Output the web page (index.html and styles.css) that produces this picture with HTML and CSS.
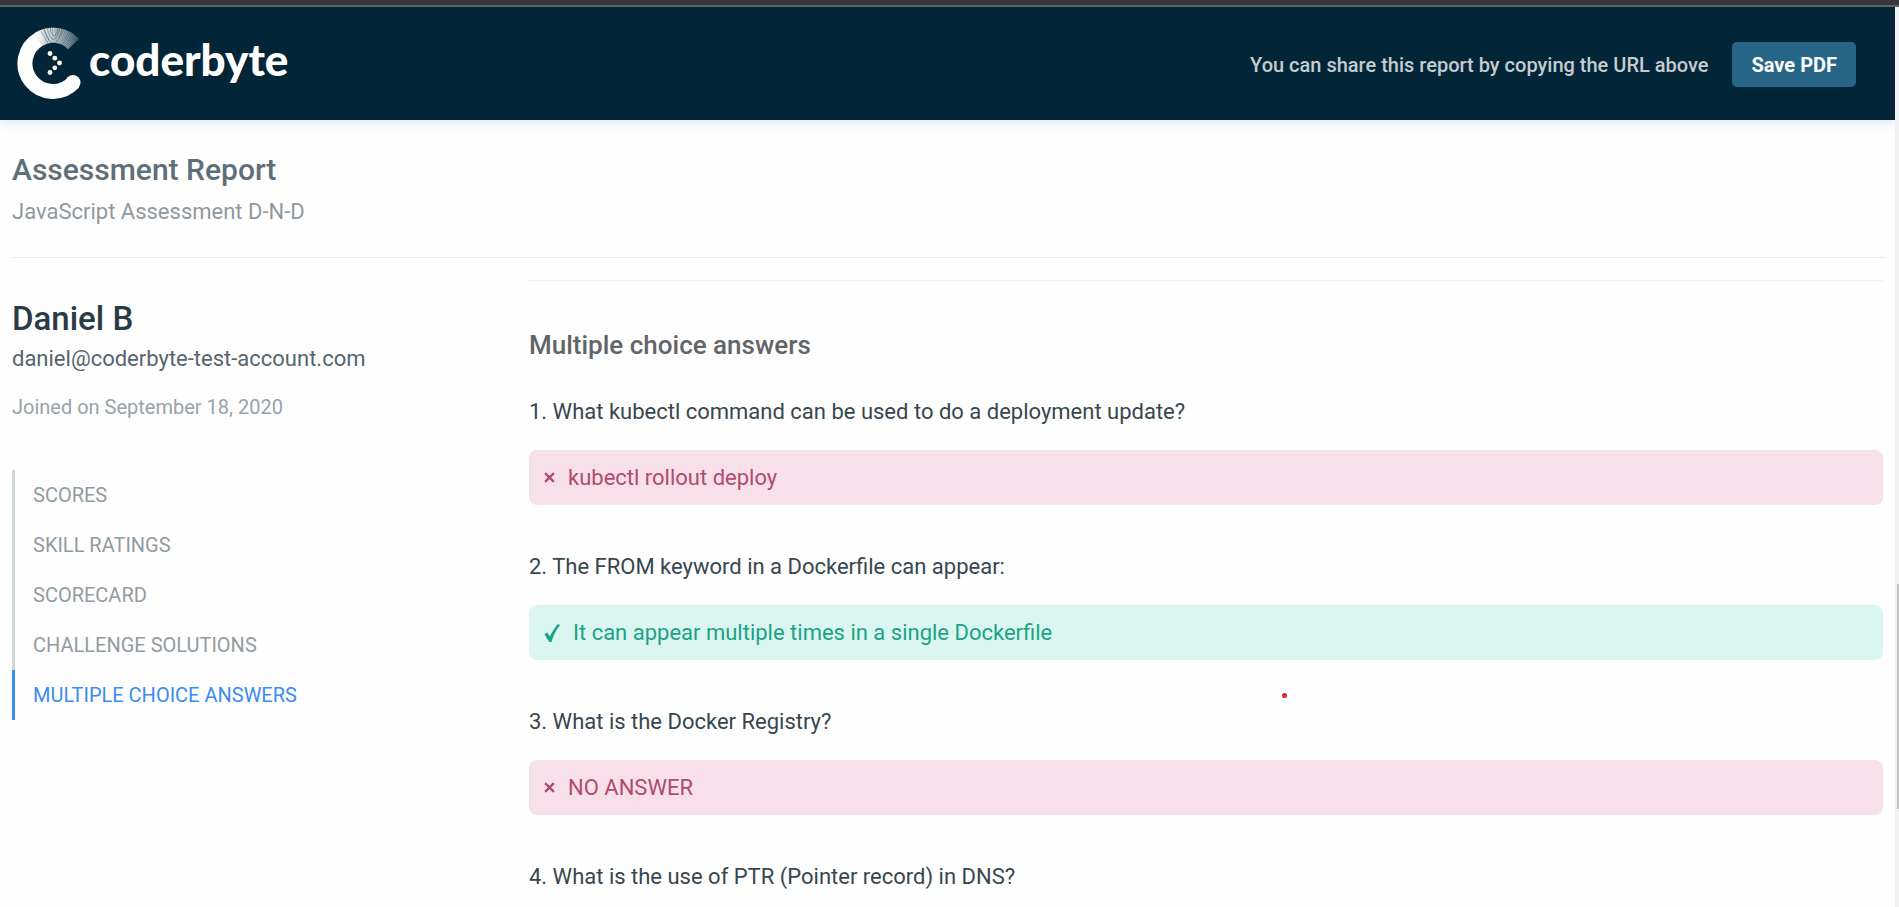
FILE: index.html
```html
<!DOCTYPE html>
<html lang="en">
<head>
<meta charset="utf-8">
<title>Assessment Report</title>
<link rel="stylesheet" href="styles.css">
</head>
<body>
<div class="browser-edge"></div>
<div class="viewport">
  <div class="page">
    <header class="topbar">
      <a class="logo" href="#" aria-label="coderbyte home">
        <svg class="logo-mark" viewBox="0 0 72 72" aria-hidden="true">
          <defs>
            <linearGradient id="fade" gradientUnits="userSpaceOnUse" x1="20" y1="0" x2="62" y2="0">
              <stop offset="0" stop-color="#fff"/>
              <stop offset="0.4" stop-color="#fff" stop-opacity="0.6"/>
              <stop offset="1" stop-color="#fff" stop-opacity="0.15"/>
            </linearGradient>
          </defs>
          <path d="M56.5 55.5A28 28 0 1 1 22 12.200" fill="none" stroke="#fff" stroke-width="15"/>
          <circle cx="56" cy="55.500" r="7.500" fill="#fff"/>
          <path d="M21.800 12.200A28 28 0 0 1 56.500 17" fill="none" stroke="url(#fade)" stroke-width="15"/>
          <path d="M30 8.700A28 28 0 0 1 56.500 17" fill="none" stroke="url(#fade)" stroke-width="15" stroke-dasharray="0.600 0.900"/>
          <g fill="none" stroke="#022638" stroke-width="0.700" opacity="0.450">
            <path d="M24 4L31 16M27 3L33 15M30 1Q36 24 43 1M33 1Q37 17 41 1M27 1Q36 32 46 1"/>
          </g>
          <g fill="#fff">
            <circle cx="33" cy="26.500" r="2.400"/><circle cx="37.800" cy="31.200" r="2.400"/><circle cx="42.500" cy="36" r="2.400"/><circle cx="37.800" cy="40.800" r="2.400"/><circle cx="33" cy="45.500" r="2.400"/>
          </g>
        </svg>
        <span class="logo-name">coderbyte</span>
      </a>
      <div class="share">
        <span class="share-note">You can share this report by copying the URL above</span>
        <button class="save" type="button">Save PDF</button>
      </div>
    </header>

    <div class="report-head">
      <h1 class="report-title">Assessment Report</h1>
      <p class="report-subtitle">JavaScript Assessment D-N-D</p>
    </div>

    <div class="columns">
      <aside class="profile">
        <h2 class="name">Daniel B</h2>
        <p class="email">daniel@coderbyte-test-account.com</p>
        <p class="joined">Joined on September 18, 2020</p>
        <nav class="sections">
          <a class="section-link" href="#">SCORES</a>
          <a class="section-link" href="#">SKILL RATINGS</a>
          <a class="section-link" href="#">SCORECARD</a>
          <a class="section-link" href="#">CHALLENGE SOLUTIONS</a>
          <a class="section-link active" href="#">MULTIPLE CHOICE ANSWERS</a>
        </nav>
      </aside>

      <main class="answers">
        <h2 class="answers-title">Multiple choice answers</h2>
        <section class="item">
          <h3 class="question">1. What kubectl command can be used to do a deployment update?</h3>
          <p class="answer wrong"><svg class="cross" viewBox="0 0 10 10" aria-hidden="true"><path d="M1 1L9 9M9 1L1 9"/></svg>kubectl rollout deploy</p>
        </section>
        <section class="item">
          <h3 class="question">2. The FROM keyword in a Dockerfile can appear:</h3>
          <p class="answer right"><svg class="check" viewBox="0 0 15 18" aria-hidden="true"><path d="M0 10.500L2.600 8.500L5.500 12.500Q9 4.500 13.500 0L15.500 1Q9.800 8 7 18L4.800 18Z"/></svg>It can appear multiple times in a single Dockerfile</p>
        </section>
        <section class="item">
          <h3 class="question">3. What is the Docker Registry?</h3>
          <p class="answer wrong"><svg class="cross" viewBox="0 0 10 10" aria-hidden="true"><path d="M1 1L9 9M9 1L1 9"/></svg>NO ANSWER</p>
        </section>
        <section class="item">
          <h3 class="question">4. What is the use of PTR (Pointer record) in DNS?</h3>
        </section>
        <span class="pointer-dot"></span>
      </main>
    </div>
  </div>
  <div class="scrollbar"><div class="thumb"></div></div>
</div>
</body>
</html>
```
FILE: styles.css
```css
* { box-sizing: border-box; }
body {
  margin: 0;
  height: 100vh;
  display: flex;
  flex-direction: column;
  overflow: hidden;
  background: #fefefe;
  font-family: Roboto, "Liberation Sans", sans-serif;
  font-size: 22px;
  line-height: 28px;
  color: #37474f;
}
h1, h2, h3, p { margin: 0; font-weight: 400; }
a { text-decoration: none; }
.browser-edge { flex: none; height: 7px; background: #35363a; border-bottom: 2px solid #5f6063; }
.viewport { flex: 1; min-height: 0; display: flex; }
.page { flex: 1; min-width: 0; }
.scrollbar { width: 4px; padding: 577px 0 0 2px; background: #f1f1f1; }
.thumb { height: 225px; background: #c1c1c1; }

.topbar {
  display: flex;
  align-items: center;
  justify-content: space-between;
  height: 113px;
  padding: 0 39px 0 17px;
  background: #022638;
  box-shadow: 0 2px 12px #d5e4f3;
  clip-path: inset(0 0 -14px 0);
}
.logo { display: flex; align-items: center; padding-bottom: 2px; color: #fff; }
.logo-mark { width: 72px; height: 72px; }
.logo-name { font-family: Lato, sans-serif; font-size: 44px; font-weight: 900; line-height: 56px; padding-bottom: 8px; }
.share { display: flex; align-items: center; gap: 24px; padding-top: 2px; }
.share-note { font-size: 20px; font-weight: 500; color: #c4ccd0; }
.save {
  height: 45px;
  padding: 0 19px;
  border: 0;
  border-radius: 5px;
  background: #276587;
  color: #fff;
  font-family: inherit;
  font-size: 20px;
  font-weight: 700;
}

.report-head { margin: 0 9px 0 12px; padding: 32px 0 31px; border-bottom: 1px solid #e9ebec; }
.report-title { font-size: 30px; font-weight: 500; line-height: 36px; color: #5f6f79; }
.report-subtitle { padding-top: 10px; color: #90999e; }

.columns { display: grid; grid-template-columns: 517px 1fr; padding: 0 12px; }
.profile { padding-top: 41px; }
.name { font-size: 33px; font-weight: 500; line-height: 40px; color: #2b3b45; }
.email { padding-top: 6px; color: #56656e; }
.joined { padding-top: 20px; font-size: 20px; color: #98a3a8; }
.sections { display: flex; flex-direction: column; padding-top: 49px; }
.section-link { padding: 11px 0 11px 18px; border-left: 3px solid #cfd6d9; font-size: 20px; color: #919ca1; }
.section-link.active { border-color: #3b8cf0; color: #3b8cf0; }

.answers { position: relative; margin-top: 22px; padding-top: 50px; border-top: 1px solid #f0f1f2; }
.answers-title { font-size: 26px; font-weight: 500; color: #616568; padding-bottom: 39px; }
.item { padding-bottom: 48px; }
.question { font-size: 22px; color: #37474f; }
.answer {
  display: flex;
  align-items: center;
  height: 55px;
  margin-top: 24px;
  padding: 0 15px;
  gap: 13px;
  border-radius: 8px;
}
.wrong { background: #f7e0e9; color: #b04a70; }
.right { background: #dbf6f0; color: #1aa386; }
.cross { width: 11px; height: 11px; fill: none; stroke: currentColor; stroke-width: 2; }
.check { width: 16px; height: 18px; fill: currentColor; }
.pointer-dot {
  position: absolute;
  left: 753px;
  top: 412px;
  width: 5px;
  height: 5px;
  border-radius: 50%;
  background: #e0202c;
}
```
